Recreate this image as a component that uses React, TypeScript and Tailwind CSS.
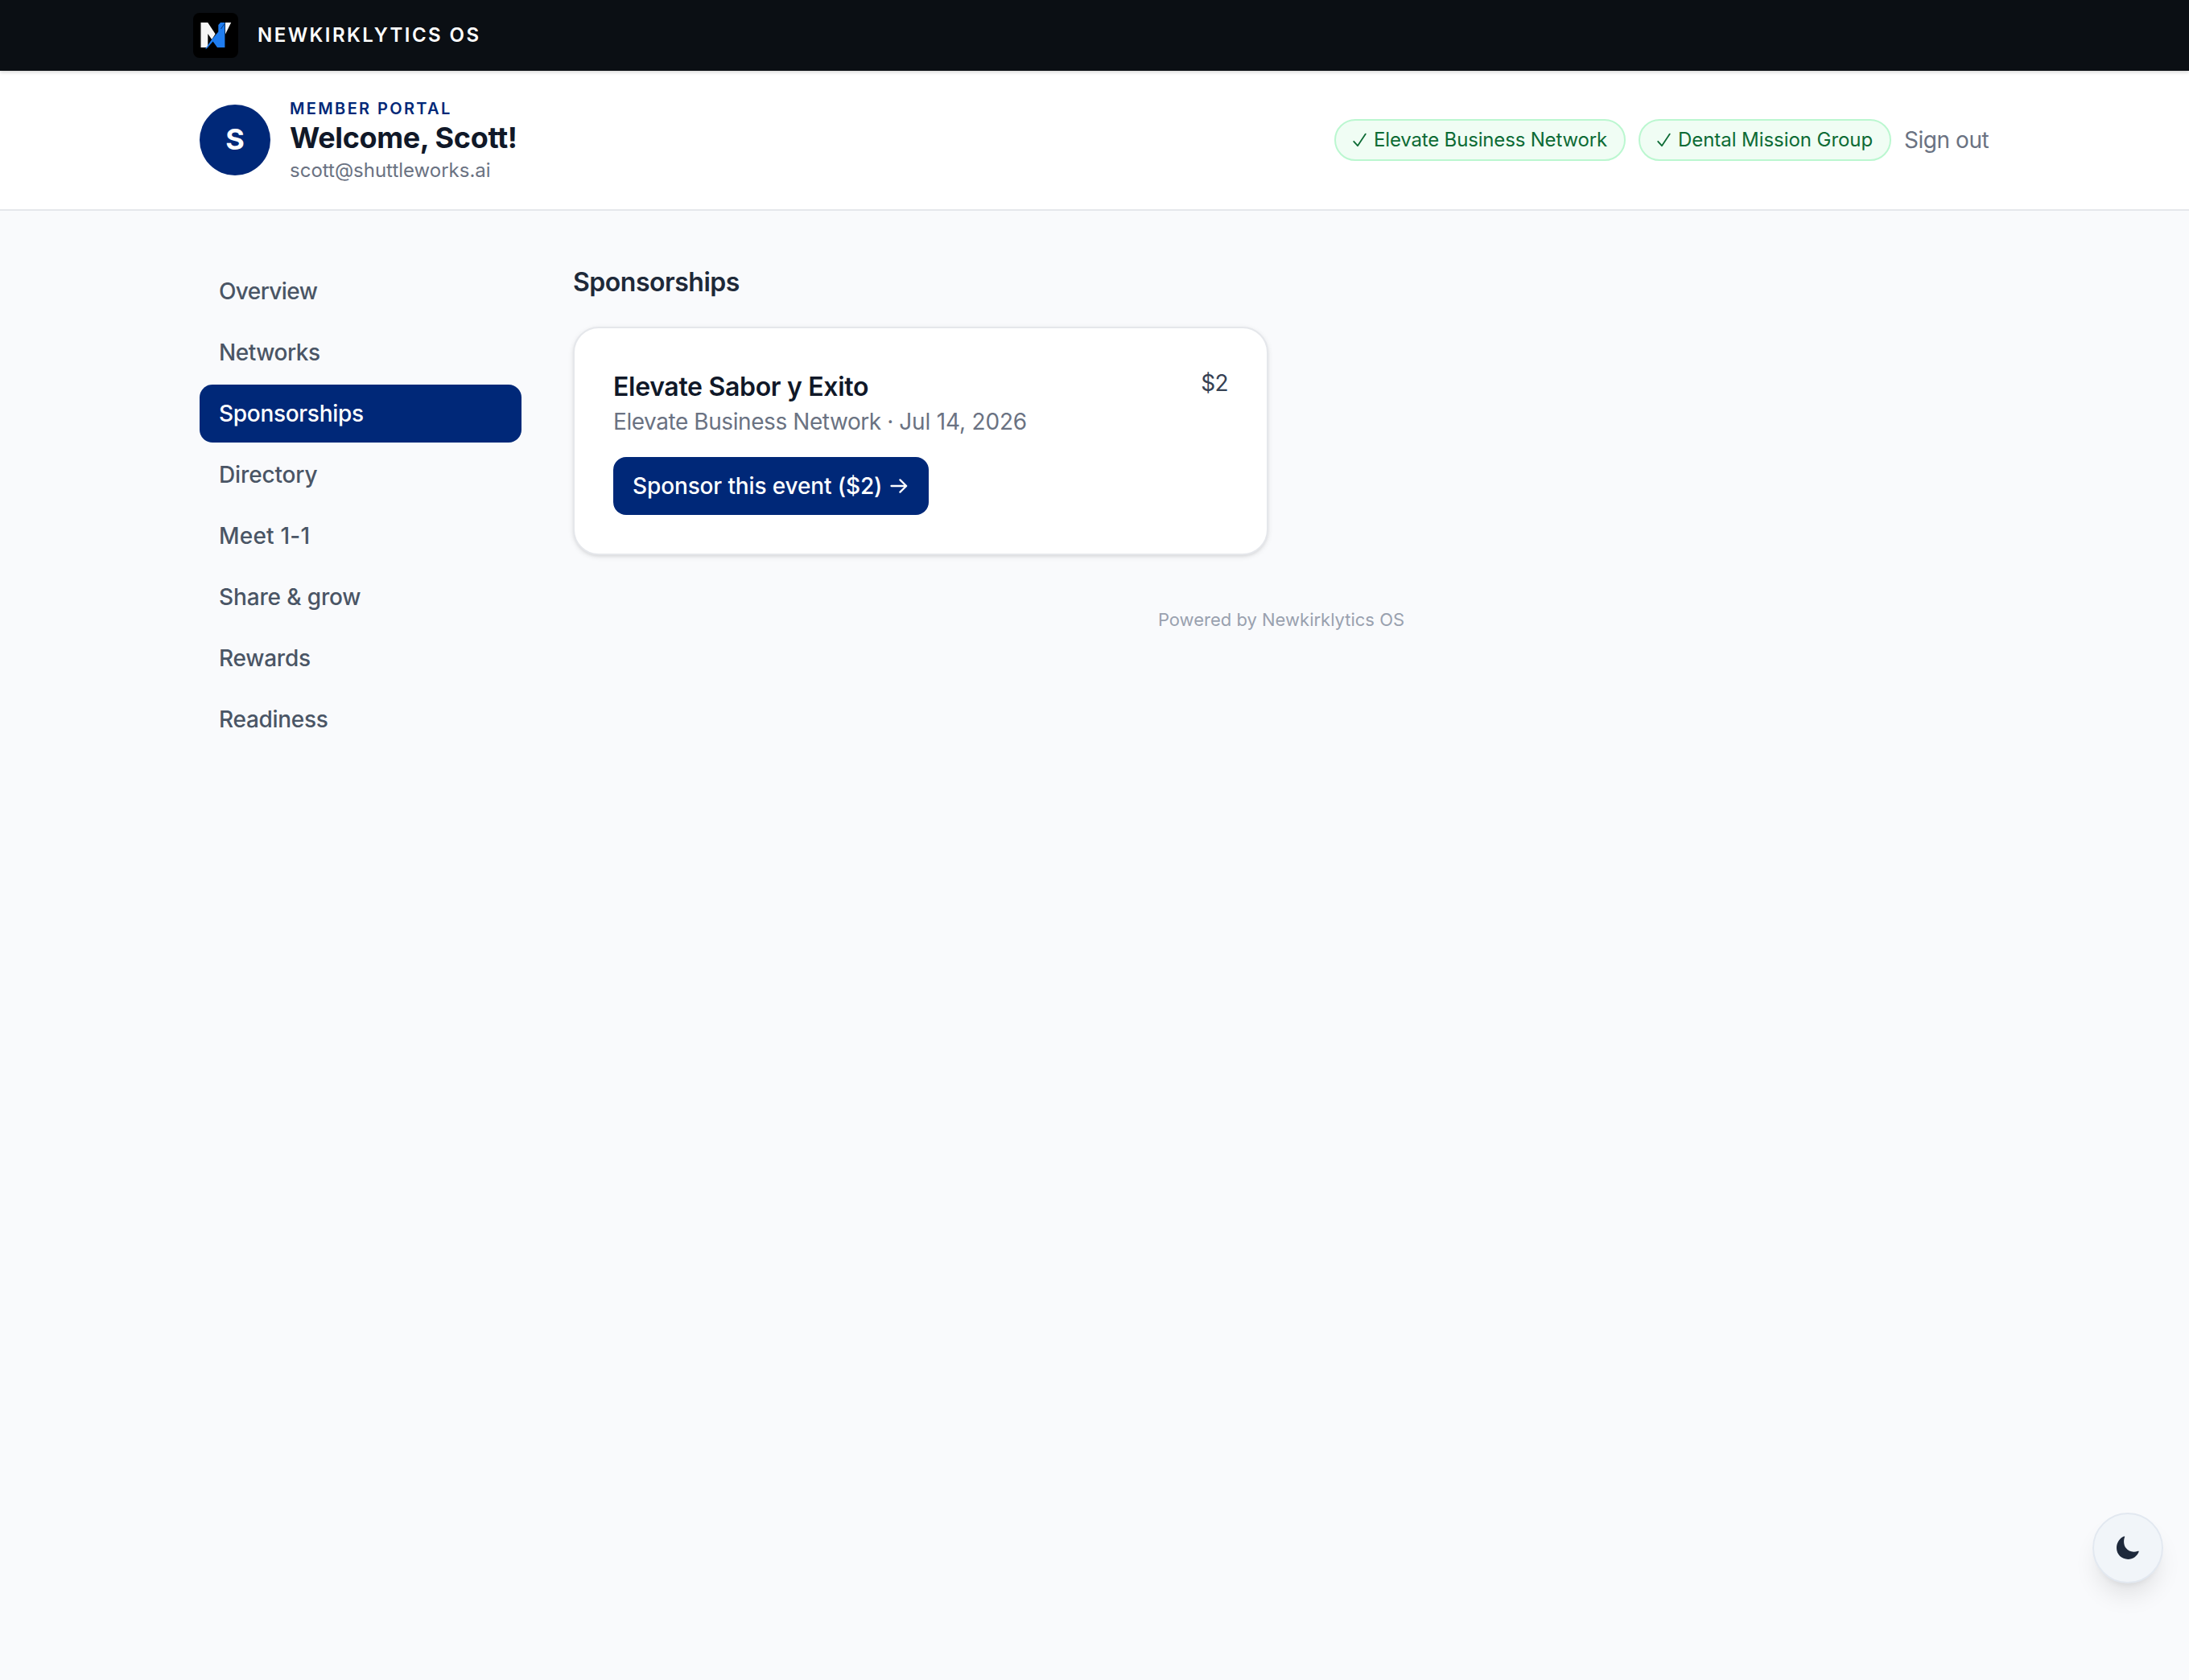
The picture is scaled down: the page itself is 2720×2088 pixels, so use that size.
const nav = [
  { label: "Overview", spacing: "tracking-[-0.6px]" },
  { label: "Networks", spacing: "tracking-[-0.46px]" },
  { label: "Sponsorships", spacing: "tracking-[-0.3px]", active: true },
  { label: "Directory", spacing: "tracking-[-0.14px]" },
  { label: "Meet 1-1", spacing: "tracking-[0.2px]" },
  { label: "Share & grow", spacing: "tracking-[-0.14px]" },
  { label: "Rewards", spacing: "tracking-[-0.24px]" },
  { label: "Readiness", spacing: "tracking-[-0.3px]" },
];

const networks = [
  { name: "Elevate Business Network", width: "w-[362px]", spacing: "tracking-[-0.17px]" },
  { name: "Dental Mission Group", width: "w-[314px]", spacing: "tracking-[-0.06px]" },
];

function Logo() {
  return (
    <svg viewBox="0 0 56 56" className="size-14 rounded-lg bg-black" aria-hidden="true">
      <path d="M9.5 12H18.2L27.6 26.2L23.2 33L18.3 26V43H9.5Z" fill="#f5f5f5" />
      <path d="M40 12H47.2L40 26.5Z" fill="#f5f5f5" />
      <path d="M31.3 15L34 12H39.4V43H30L24.6 35.4L16.8 44.4L15 44.9L23 33.2L31.3 23.5Z" fill="#1f7df0" />
      <path d="M34.5 20L38.6 14" stroke="#0b3b80" strokeWidth="1" />
    </svg>
  );
}

function CheckMark() {
  return (
    <svg viewBox="0 0 20 24" className="h-6 w-5 shrink-0" fill="none" stroke="currentColor" strokeWidth="1.8" strokeLinecap="round" strokeLinejoin="round" aria-hidden="true">
      <path d="M2.2 13.8L7 19.2L16.8 4.6" />
    </svg>
  );
}

export default function App() {
  return (
    <div className="min-h-[2088px] bg-[#f9fafc] font-['Inter',sans-serif] antialiased">
      <div className="relative flex h-22 items-center bg-[#0b0f14] px-60 shadow-[0_2px_4px_rgba(0,0,0,0.15)]">
        <Logo />
        <span className="ml-6 text-2xl font-semibold tracking-[2.44px] text-white">NEWKIRKLYTICS OS</span>
      </div>

      <header className="border-b-2 border-[#e5e7eb] bg-white">
        <div className="mx-auto flex w-[2224px] items-center justify-between py-8">
          <div className="flex items-center gap-6">
            <div className="flex size-22 items-center justify-center rounded-full bg-[#002878] pb-0.5 text-[36px] leading-none font-bold text-white">
              S
            </div>
            <div>
              <p className="text-xl leading-[30px] font-semibold tracking-[2.36px] text-[#002878]">MEMBER PORTAL</p>
              <h1 className="text-4xl leading-[42px] font-bold tracking-[-0.35px] text-gray-900">Welcome, Scott!</h1>
              <p className="mt-0.5 -mb-0.5 text-2xl leading-9 text-gray-500">scott@shuttleworks.ai</p>
            </div>
          </div>
          <div className="flex items-center gap-4">
            {networks.map((n) => (
              <span
                key={n.name}
                className={`${n.width} flex h-[52px] items-center gap-[7px] rounded-full border-2 border-[#bbf7d0] bg-[#f0fdf4] pl-5 text-2xl whitespace-nowrap text-[#0d6b35]`}
              >
                <CheckMark />
                <span className={n.spacing}>{n.name}</span>
              </span>
            ))}
            <button className="w-[106px] text-left text-[28px] leading-10 tracking-[-0.45px] whitespace-nowrap text-gray-500">Sign out</button>
          </div>
        </div>
      </header>

      <div className="mx-auto flex w-[2224px] items-start gap-16 pt-16">
        <nav className="flex w-[400px] shrink-0 flex-col gap-1">
          {nav.map((n) => (
            <a
              key={n.label}
              className={`${n.spacing} ${n.active ? "bg-[#002878] text-white" : "text-gray-600"} rounded-2xl px-6 py-4 text-[28px] leading-10 font-medium`}
            >
              {n.label}
            </a>
          ))}
        </nav>

        <main className="flex-1">
          <h2 className="text-[32px] leading-[50px] font-semibold tracking-[-0.48px] text-gray-800">Sponsorships</h2>
          <section className="mt-[30px] w-[864px] rounded-[32px] border-2 border-[#e5e7eb] bg-white p-[46px] shadow-[0_2px_6px_rgba(0,0,0,0.1),0_2px_4px_-2px_rgba(0,0,0,0.1)]">
            <div className="flex items-start justify-between px-0.5 pt-0.5">
              <div>
                <h3 className="text-[32px] leading-[50px] font-semibold tracking-[-0.31px] text-gray-900">Elevate Sabor y Exito</h3>
                <p className="-mt-0.5 text-[28px] leading-10 text-gray-500">
                  <span className="tracking-[-0.43px]">Elevate Business Network · </span>
                  <span className="tracking-[-0.18px]">Jul 14, 2026</span>
                </p>
              </div>
              <span className="text-[28px] leading-10 tracking-[-0.6px] text-gray-700">$2</span>
            </div>
            <button className="mx-0.5 mt-6 mb-0.5 flex h-18 w-[392px] items-center rounded-2xl bg-[#002878] px-6 text-[28px] leading-10 font-medium tracking-[-0.13px] whitespace-nowrap text-white">
              Sponsor this event ($2)
              <svg viewBox="0 0 22 20" className="ml-2.5 h-5 w-[22px]" fill="none" stroke="currentColor" strokeWidth="2.3" strokeLinecap="round" strokeLinejoin="round" aria-hidden="true">
                <path d="M1.5 10H20M12.4 2.4L20.2 10L12.4 17.6" />
              </svg>
            </button>
          </section>
          <footer className="mt-16 text-center text-[22px] leading-8 text-gray-400">Powered by Newkirklytics OS</footer>
        </main>
      </div>

      <button
        aria-label="Toggle dark mode"
        className="fixed right-8 bottom-[120px] flex size-22 items-center justify-center rounded-full border-2 border-[#e2e8f0] bg-[#f1f5f9] text-[#1e293b] shadow-[0_20px_30px_-6px_rgba(0,0,0,0.1),0_8px_12px_-8px_rgba(0,0,0,0.1)]"
      >
        <svg viewBox="0 0 30 30" className="size-[30px]" fill="currentColor" aria-hidden="true">
          <path d="M11.2 1C9.6 4.9 9.5 10.9 12.7 15.1C16 19.4 21.5 20.8 27.6 18.8C28.4 18.6 28.9 19.1 28.6 19.8C26.4 25.3 21.3 29 15.3 29C7.3 29 1 22.9 1 15.1C1 8.6 4.6 2.9 10 .6C10.8 .2 11.5 .4 11.2 1Z" />
        </svg>
      </button>
    </div>
  );
}
